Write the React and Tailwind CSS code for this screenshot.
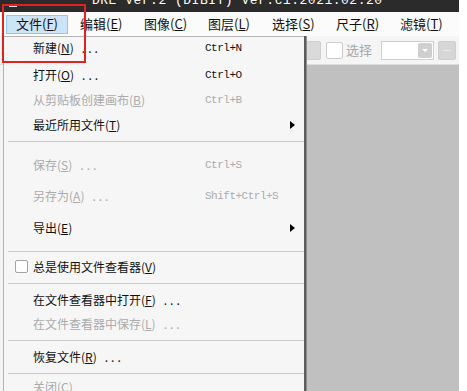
const cjk = { fontFamily: '"Noto Sans CJK SC", "Noto Sans", sans-serif' }
const mono = { fontFamily: '"Liberation Mono", "DejaVu Sans Mono", monospace' }

const topMenus = [
  ['文件', 'F'],
  ['编辑', 'E'],
  ['图像', 'C'],
  ['图层', 'L'],
  ['选择', 'S'],
  ['尺子', 'R'],
  ['滤镜', 'T'],
]

// h = row height in px, to hit the row centres in the screenshot
const items = [
  { label: '新建', key: 'N', dots: true, shortcut: 'Ctrl+N', h: 22 },
  { label: '打开', key: 'O', dots: true, shortcut: 'Ctrl+O', h: 32 },
  { label: '从剪贴板创建画布', key: 'B', shortcut: 'Ctrl+B', h: 18, disabled: true },
  { label: '最近所用文件', key: 'T', submenu: true, h: 31 },
  { sep: true, h: 3 },
  { label: '保存', key: 'S', dots: true, shortcut: 'Ctrl+S', h: 44, disabled: true },
  { label: '另存为', key: 'A', dots: true, shortcut: 'Shift+Ctrl+S', h: 18, disabled: true },
  { label: '导出', key: 'E', submenu: true, h: 45 },
  { sep: true, h: 3 },
  { label: '总是使用文件查看器', key: 'V', check: true, h: 27 },
  { sep: true, h: 6 },
  { label: '在文件查看器中打开', key: 'F', dots: true, h: 28 },
  { label: '在文件查看器中保存', key: 'L', dots: true, h: 20, disabled: true },
  { sep: true, h: 12 },
  { label: '恢复文件', key: 'R', dots: true, h: 22 },
  { sep: true, h: 10 },
  { label: '关闭', key: 'C', h: 18, disabled: true },
]

function Mnemonic({ label, k }) {
  return (
    <span className="whitespace-nowrap">
      {label}(<span className="underline underline-offset-1">{k}</span>)
    </span>
  )
}

function MenuRow({ item }) {
  if (item.sep) {
    return (
      <div className="flex items-center pl-[4px]" style={{ height: item.h }}>
        <div className="h-px flex-1 bg-[#c9c9c9]" />
      </div>
    )
  }
  const color = item.disabled ? 'text-[#ababab]' : 'text-[#111]'
  return (
    <div
      className={`flex items-center text-[12px] ${color} ${item.check ? 'pl-[11px]' : 'pl-[29px]'}`}
      style={{ height: item.h, ...cjk }}
    >
      {item.check && (
        <span className="w-[13px] h-[13px] mr-[5px] rounded-[2px] border border-[#a4a4a4] bg-white" />
      )}
      <span className="w-[172px] flex items-center">
        <Mnemonic label={item.label} k={item.key} />
        {item.dots && <span className="ml-[8px] tracking-[3px]">...</span>}
      </span>
      {item.shortcut && (
        <span className="text-[11px] tracking-[-0.5px]" style={mono}>{item.shortcut}</span>
      )}
      {item.submenu && (
        <span className="ml-auto mr-[9px] w-0 h-0 border-y-[4px] border-y-transparent border-l-[5px] border-l-black" />
      )}
    </div>
  )
}

export default function App() {
  return (
    <div className="relative w-[467px] h-[391px] overflow-hidden bg-white flex">
      <div className="w-[459px] flex flex-col">
        {/* title bar */}
        <div className="h-[12px] bg-[#2b2b2b] relative overflow-hidden flex">
          <div className="mt-[5px] ml-[9px] w-[8px] h-[2px] bg-[#d8d8d8]" />
          <div
            className="ml-[75px] mt-[-6px] text-[13px] leading-[13px] text-white tracking-[0.5px] whitespace-nowrap"
            style={{ fontFamily: '"Liberation Mono", monospace' }}
          >
            DRE Ver.2 (DIBIT) Ver.ci.2021.02.20
          </div>
        </div>

        {/* menu bar */}
        <div className="h-[24px] bg-[#fbfbfb] flex items-center pl-[6px] text-[13px] text-[#111]" style={cjk}>
          {topMenus.map(([label, k], i) => (
            <div
              key={label}
              className={`h-[19px] w-[62px] mr-[2px] pl-[9px] flex items-center border ${
                i === 0 ? 'bg-[#cce4f7] border-[#98c3ea]' : 'border-transparent'
              }`}
            >
              <Mnemonic label={label} k={k} />
            </div>
          ))}
        </div>

        {/* toolbar */}
        <div className="h-[29px] bg-[#f5f5f5] border-b border-[#dcdcdc] flex items-center justify-end pr-[3px]">
          <div className="w-[17px] h-[19px] rounded-[2px] bg-[#dadada] border border-[#cfcfcf]" />
          <div className="ml-[5px] w-[17px] h-[17px] rounded-[2px] bg-white border border-[#cdcdcd]" />
          <span className="ml-[3px] text-[13px] text-[#a8a8a8]" style={cjk}>选择</span>
          <div className="ml-[9px] w-[53px] h-[19px] bg-white border border-[#cfcfcf] flex items-center justify-end pr-[1px]">
            <div className="w-[14px] h-[15px] rounded-[2px] bg-[#cfcfcf] flex items-center justify-center">
              <span className="w-0 h-0 border-x-[3px] border-x-transparent border-t-[3px] border-t-white" />
            </div>
          </div>
          <div className="ml-[4px] w-[18px] h-[19px] rounded-[2px] bg-[#d6d6d6] border border-[#cdcdcd] flex items-center justify-center">
            <div className="w-[8px] h-px bg-[#e8e8e8]" />
          </div>
        </div>

        {/* work area */}
        <div className="flex-1 flex">
          <div className="w-[306px] bg-[#f3f3f3]" />
          <div className="flex-1 bg-[#c0c0c0]" />
        </div>
      </div>
      <div className="flex-1 bg-white" />

      {/* open File menu */}
      <div className="absolute left-[3px] top-[36px] w-[301px] bg-[#f6f6f6] border-l border-t border-[#b4b4b4] shadow-[2px_0_0_#5c5c5c,3px_0_0_#8e8e8e]">
        {items.map((item, i) => (
          <MenuRow key={i} item={item} />
        ))}
      </div>

      {/* red highlight box */}
      <div className="absolute left-[2px] top-[4px] w-[84px] h-[59px] border-2 border-[#e3211f]" />
    </div>
  )
}
